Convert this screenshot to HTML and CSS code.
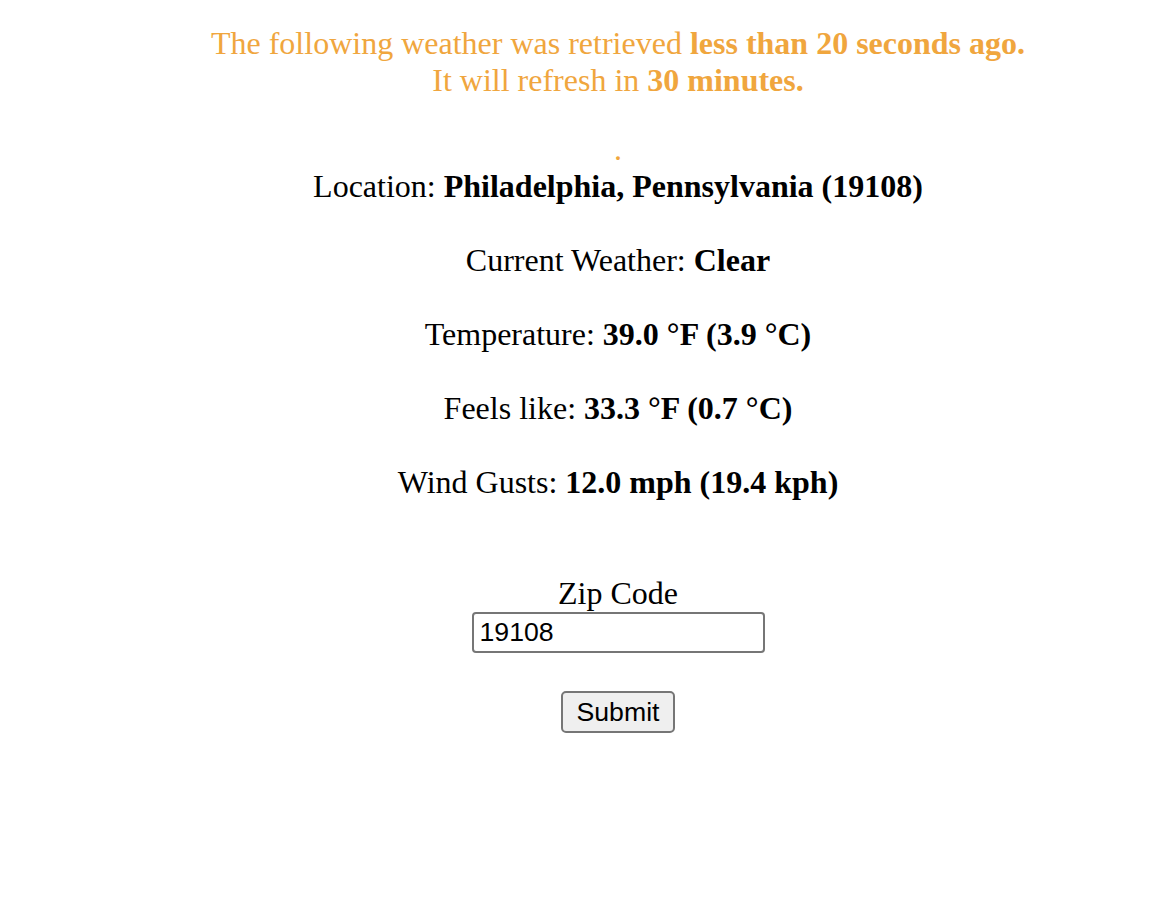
FILE: index.html
```html
<!DOCTYPE html>
<html lang="en">
<head>
<meta charset="utf-8">
<title>Weather</title>
<link rel="stylesheet" href="styles.css">
</head>
<body>
<main class="page">
  <div class="status">
    The following weather was retrieved <b>less than 20 seconds ago.</b><br>
    It will refresh in <b>30 minutes.</b>
  </div>
  <div class="weather">
    <div class="dot">.</div>
    <div class="rows">
      <div class="row">Location: <b>Philadelphia, Pennsylvania (19108)</b></div>
      <div class="row">Current Weather: <b>Clear</b></div>
      <div class="row">Temperature: <b>39.0 °F (3.9 °C)</b></div>
      <div class="row">Feels like: <b>33.3 °F (0.7 °C)</b></div>
      <div class="row">Wind Gusts: <b>12.0 mph (19.4 kph)</b></div>
    </div>
  </div>
  <form class="zip-form">
    <label class="zip-label" for="zip">Zip Code</label>
    <input class="zip-input" id="zip" type="text" value="19108">
    <button class="submit" type="button">Submit</button>
  </form>
</main>
</body>
</html>
```

FILE: styles.css
```css
html, body {
  margin: 0;
  padding: 0;
  background: #ffffff;
}

body {
  font-family: "Liberation Serif", "Times New Roman", serif;
  font-size: 32px;
  line-height: 37px;
  color: #000000;
}

.page {
  padding: 25px 0 0 72px;
  text-align: center;
}

.status {
  color: #f0a63e;
  margin: 0 0 32px;
}

.dot {
  color: #f0a63e;
}

.rows {
  display: flex;
  flex-direction: column;
  gap: 37px;
}

.zip-form {
  margin-top: 74px;
  display: flex;
  flex-direction: column;
  align-items: center;
}

.zip-label {
  display: block;
  margin-bottom: 0;
}

.zip-input {
  box-sizing: border-box;
  width: 293px;
  height: 41px;
  margin: 0;
  padding: 0 6px;
  border: 2px solid #767676;
  border-radius: 4px;
  font-family: "Liberation Sans", Arial, sans-serif;
  font-size: 26.67px;
  color: #000000;
  background: #ffffff;
}

.submit {
  box-sizing: border-box;
  height: 42px;
  margin-top: 38px;
  padding: 0 14px;
  border: 2px solid #767676;
  border-radius: 5px;
  background: #efefef;
  font-family: "Liberation Sans", Arial, sans-serif;
  font-size: 26.67px;
  color: #000000;
}
```
